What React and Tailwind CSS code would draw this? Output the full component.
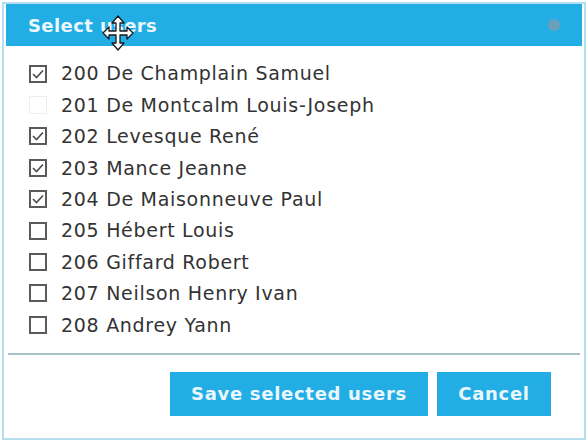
import { useState } from "react";

const USERS = [
  [200, "De Champlain Samuel", true],
  [201, "De Montcalm Louis-Joseph", null],
  [202, "Levesque René", true],
  [203, "Mance Jeanne", true],
  [204, "De Maisonneuve Paul", true],
  [205, "Hébert Louis", false],
  [206, "Giffard Robert", false],
  [207, "Neilson Henry Ivan", false],
  [208, "Andrey Yann", false],
];

function Box({ state }) {
  // null = faded/disabled box
  if (state === null) {
    return <span className="w-[18px] h-[18px] border border-[#eeeeee] shrink-0" />;
  }
  return (
    <span className="w-[18px] h-[18px] border-2 border-[#5a5a5a] shrink-0 flex items-center justify-center">
      {state && (
        <svg width="12" height="10" viewBox="0 0 12 10">
          <path d="M1 5 L4.5 8.5 L11 1.5" fill="none" stroke="#4a4a4a" strokeWidth="1.6" />
        </svg>
      )}
    </span>
  );
}

function MoveCursor() {
  return (
    <svg width="32" height="36" viewBox="0 0 32 36" className="absolute left-[96px] top-[11px]">
      <path
        d="M16 1 L22 8 L18 8 L18 16 L25 16 L25 12 L31 18 L25 24 L25 20 L18 20 L18 28 L22 28 L16 35 L10 28 L14 28 L14 20 L7 20 L7 24 L1 18 L7 12 L7 16 L14 16 L14 8 L10 8 Z"
        fill="#ffffff"
        stroke="#1a1a1a"
        strokeWidth="1.3"
        strokeLinejoin="round"
      />
    </svg>
  );
}

export default function App() {
  const [users] = useState(USERS);

  return (
    <div
      className="w-[588px] h-[443px] bg-white p-[2px]"
      style={{ fontFamily: "'DejaVu Sans', Verdana, sans-serif" }}
    >
      <div className="h-[438px] border-2 border-[#b5dff1] px-[2px] flex flex-col">
        <div className="relative h-[42px] bg-[#22ade5] flex items-center pl-[22px] pr-[22px] justify-between">
          <span className="text-[#eaf7fd] font-bold text-[18px] tracking-[0.4px]">Select users</span>
          <span className="w-[12px] h-[12px] rounded-full bg-[#8a9aab] opacity-70" />
          <MoveCursor />
        </div>

        <div className="pt-[12px] pb-[12px] pl-[23px]">
          {users.map(([id, name, state]) => (
            <div
              key={id}
              className="h-[31.4px] flex items-center gap-[14px] text-[19px] tracking-[0.7px] text-[#333333]"
            >
              <Box state={state} />
              <span>
                {id} {name}
              </span>
            </div>
          ))}
        </div>

        <div className="mx-[2px] h-[2px] bg-[#a9bfca]" />

        <div className="flex justify-end gap-[9px] pt-[17px] pr-[31px]">
          <button className="w-[258px] h-[44px] bg-[#22ade5] text-[#eaf7fd] font-bold text-[18px] tracking-[0.7px]">
            Save selected users
          </button>
          <button className="w-[114px] h-[44px] bg-[#22ade5] text-[#eaf7fd] font-bold text-[18px] tracking-[0.7px]">
            Cancel
          </button>
        </div>
      </div>
    </div>
  );
}
